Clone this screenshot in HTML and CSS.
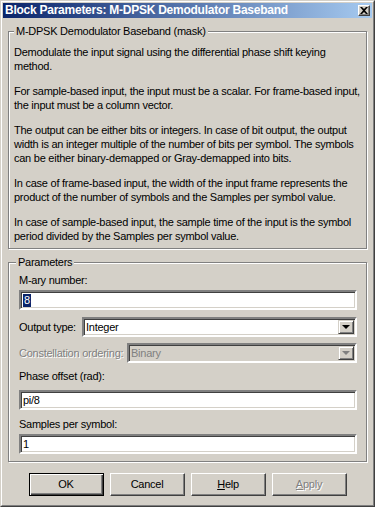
FILE: index.html
```html
<!DOCTYPE html>
<html>
<head>
<meta charset="utf-8">
<link rel="stylesheet" href="styles.css">
</head>
<body>
<div class="window">
  <div class="frame">
    <div class="titlebar">
      <span class="title">Block Parameters: M-DPSK Demodulator Baseband</span>
      <span class="close"><svg width="8" height="7" viewBox="0 0 8 7"><path d="M0 0h2l2 2 2-2h2L5 3.5 8 7H6L4 5 2 7H0l3-3.5z" fill="#000"/></svg></span>
    </div>
    <div class="content">
      <div class="group desc">
        <span class="legend">M-DPSK Demodulator Baseband (mask)</span>
        <p>Demodulate the input signal using the differential phase shift keying<br>method.</p>
        <p>For sample-based input, the input must be a scalar. For frame-based input,<br>the input must be a column vector.</p>
        <p>The output can be either bits or integers. In case of bit output, the output<br>width is an integer multiple of the number of bits per symbol. The symbols<br>can be either binary-demapped or Gray-demapped into bits.</p>
        <p>In case of frame-based input, the width of the input frame represents the<br>product of the number of symbols and the Samples per symbol value.</p>
        <p>In case of sample-based input, the sample time of the input is the symbol<br>period divided by the Samples per symbol value.</p>
      </div>
      <div class="group params">
        <span class="legend">Parameters</span>
        <div class="label first">M-ary number:</div>
        <div class="edit"><span class="sel">8</span></div>
        <div class="row out">
          <span class="rlabel w-out">Output type:</span>
          <div class="combo"><span class="ctext">Integer</span><span class="arrow"><i class="tri"></i></span></div>
        </div>
        <div class="row con">
          <span class="rlabel w-con disabled">Constellation ordering:</span>
          <div class="combo off"><span class="ctext">Binary</span><span class="arrow"><i class="tri"></i></span></div>
        </div>
        <div class="label phase">Phase offset (rad):</div>
        <div class="edit">pi/8</div>
        <div class="label samples">Samples per symbol:</div>
        <div class="edit">1</div>
      </div>
      <div class="buttons">
        <span class="btn default"><span class="bi">OK</span></span>
        <span class="btn"><span class="bi">Cancel</span></span>
        <span class="btn"><span class="bi"><u>H</u>elp</span></span>
        <span class="btn off"><span class="bi"><u>A</u>pply</span></span>
      </div>
    </div>
  </div>
</div>
</body>
</html>
```

FILE: styles.css
```css
html, body {
  margin: 0;
  padding: 0;
  background: #d4d0c8;
}
body {
  font-family: "Liberation Sans", Arial, sans-serif;
  font-size: 11px;
  letter-spacing: -0.25px;
  color: #000;
}
.window {
  width: 375px;
  height: 507px;
  box-sizing: border-box;
  border: 1px solid;
  border-color: #d4d0c8 #404040 #404040 #d4d0c8;
  background: #d4d0c8;
}
.frame {
  height: 100%;
  box-sizing: border-box;
  border: 1px solid;
  border-color: #fff #808080 #808080 #fff;
  padding: 1px;
  display: flex;
  flex-direction: column;
}
.titlebar {
  height: 15px;
  background: linear-gradient(to right, #0a246a, #a6caf0);
  display: flex;
  align-items: center;
  padding: 0 2px 0 2px;
}
.title {
  flex: 1;
  color: #fff;
  font-weight: bold;
  font-size: 12px;
  letter-spacing: -0.25px;
  line-height: 15px;
  white-space: nowrap;
}
.close {
  width: 12px;
  height: 11px;
  box-sizing: border-box;
  background: #d4d0c8;
  border: 1px solid;
  border-color: #fff #404040 #404040 #fff;
  box-shadow: inset -1px -1px 0 #808080;
  display: flex;
  align-items: center;
  justify-content: center;
}
.close svg { display: block; }
.content {
  flex: 1;
  padding: 0 5px 0 5px;
}
.group {
  border: 1px solid #808080;
  box-shadow: 1px 1px 0 #fff, inset 1px 1px 0 #fff;
}
.legend {
  display: table;
  background: #d4d0c8;
  line-height: 13px;
  margin-top: -7px;
  padding: 0 2px;
  white-space: nowrap;
}
.desc {
  margin-top: 13px;
  padding: 0 5px 5px 5px;
}
.desc .legend { margin-left: 0; }
.desc p {
  margin: 11px 0 0 0;
  line-height: 14px;
  white-space: nowrap;
}
.desc p:first-of-type { margin-top: 7px; }
.params {
  margin-top: 13px;
  padding: 0 9px 7px 10px;
}
.params .legend { margin-left: -3px; }
.label {
  line-height: 14px;
  white-space: nowrap;
}
.label.first { margin-top: 4px; margin-bottom: 3px; }
.label.phase { margin-top: 6px; margin-bottom: 7px; }
.label.samples { margin-top: 7px; margin-bottom: 3px; }
.edit, .combo {
  height: 20px;
  box-sizing: border-box;
  border: 2px solid;
  border-color: #808080 #fff #fff #808080;
  box-shadow: inset 1px 1px 0 #404040, inset -1px -1px 0 #d4d0c8;
  background: #fff;
  line-height: 16px;
  padding-left: 2px;
  white-space: nowrap;
}
.sel {
  background: #0a246a;
  color: #fff;
  display: inline-block;
  line-height: 13px;
  padding: 0 1px;
}
.row {
  display: flex;
  align-items: center;
  gap: 6px;
}
.row.out { margin-top: 7px; }
.row.con { margin-top: 6px; }
.rlabel { white-space: nowrap; flex: none; }
.w-out { width: 57px; }
.w-con { width: 102px; }
.disabled {
  color: #808080;
  text-shadow: 1px 1px 0 #fff;
}
.combo {
  flex: 1;
  display: flex;
  align-items: center;
  padding: 1px 1px 1px 2px;
}
.ctext { flex: 1; }
.combo.off { background: #d4d0c8; color: #808080; }
.arrow {
  width: 16px;
  height: 14px;
  box-sizing: border-box;
  background: #d4d0c8;
  border: 1px solid;
  border-color: #d4d0c8 #404040 #404040 #d4d0c8;
  box-shadow: inset 1px 1px 0 #fff, inset -1px -1px 0 #808080;
  display: flex;
  align-items: center;
  justify-content: center;
}
.tri {
  width: 0;
  height: 0;
  border-left: 4px solid transparent;
  border-right: 4px solid transparent;
  border-top: 4px solid #000;
}
.combo.off .tri { border-top-color: #808080; }
.buttons {
  display: flex;
  justify-content: center;
  gap: 6px;
  margin-top: 11px;
}
.btn {
  width: 75px;
  height: 23px;
  box-sizing: border-box;
  border: 1px solid;
  border-color: #fff #404040 #404040 #fff;
  box-shadow: inset -1px -1px 0 #808080;
  display: flex;
  align-items: center;
  justify-content: center;
}
.btn.default {
  border: 1px solid #000;
  box-shadow: inset 1px 1px 0 #fff, inset -1px -1px 0 #404040, inset -2px -2px 0 #808080;
}
.bi { line-height: 13px; }
.btn u { text-decoration: underline; }
.btn.off .bi {
  color: #808080;
  text-shadow: 1px 1px 0 #fff;
}
```
